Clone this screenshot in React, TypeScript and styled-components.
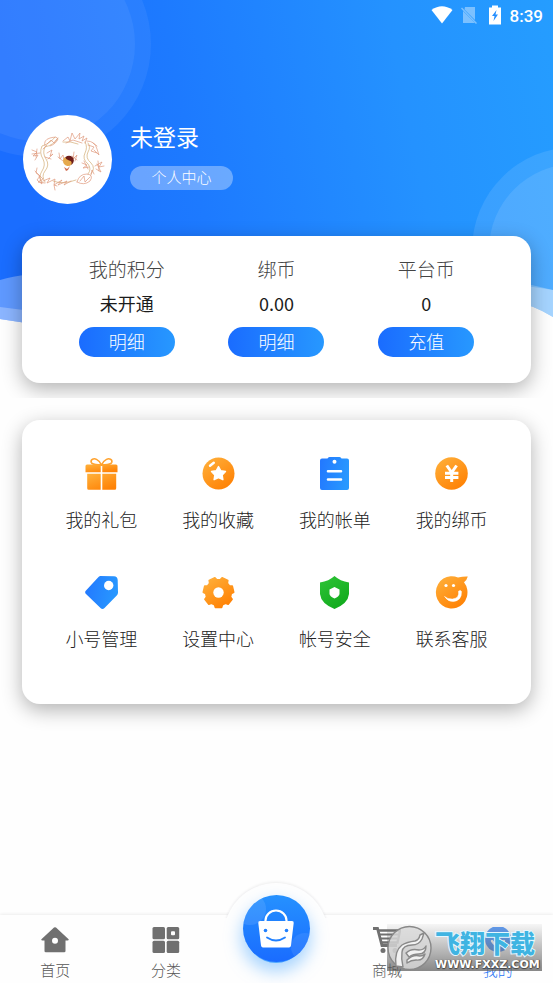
import React from "react";
import styled, { createGlobalStyle } from "styled-components";

const GlobalStyle = createGlobalStyle`
  * { box-sizing: border-box; }
  body {
    margin: 0;
    background: #fefefe;
    font-family: Roboto, "Noto Sans CJK SC", sans-serif;
    font-weight: 300;
  }
  button { font: inherit; border: 0; padding: 0; cursor: pointer; }
  a { color: inherit; text-decoration: none; }
`;

const Page = styled.div`
  min-height: 100vh;
  display: flex;
  flex-direction: column;
`;

const Header = styled.header`
  position: relative;
  overflow: hidden;
  padding-bottom: 15px;
`;

const Backdrop = styled.div`
  position: absolute;
  inset: 0 0 auto;
  height: 330px;
  overflow: hidden;
`;

const Waves = styled.svg`
  display: block;
  width: 100%;
  height: 100%;
`;

const Bubble = styled.span<{ $size: number; $top: number; $left?: number; $right?: number }>`
  position: absolute;
  width: ${(p) => p.$size}px;
  height: ${(p) => p.$size}px;
  top: ${(p) => p.$top}px;
  ${(p) => (p.$left !== undefined ? `left: ${p.$left}px;` : "")}
  ${(p) => (p.$right !== undefined ? `right: ${p.$right}px;` : "")}
  border-radius: 50%;
  background: rgba(255, 255, 255, ${(p) => (p.$right !== undefined ? 0.1 : 0.06)});
`;

const StatusBar = styled.div`
  position: relative;
  height: 32px;
  padding-right: 10px;
  display: flex;
  justify-content: flex-end;
  align-items: center;
  color: #fff;
  font: 500 17px/32px Roboto, sans-serif;
  svg { display: block; }
`;

const StatusIcons = styled.span`
  display: flex;
  align-items: center;
  gap: 8px;
  margin-right: 5px;
  padding-bottom: 2px;
`;

const Profile = styled.section`
  position: relative;
  margin-top: 83px;
  padding: 0 23px;
  display: flex;
  gap: 18px;
`;

const Avatar = styled.svg`
  flex: none;
  width: 89px;
  height: 89px;
  border-radius: 50%;
  background: #fff;
`;

const Identity = styled.div`
  display: flex;
  flex-direction: column;
  align-items: flex-start;
  padding-top: 6px;
`;

const UserName = styled.h1`
  margin: 0 0 9px;
  font-size: 23px;
  line-height: 36px;
  font-weight: 400;
  color: #fff;
`;

const CenterLink = styled.a`
  width: 103px;
  height: 24px;
  border-radius: 12px;
  background: rgba(255, 255, 255, 0.34);
  color: #fff;
  font-size: 15px;
  line-height: 25px;
  text-align: center;
`;

const Card = styled.section`
  position: relative;
  margin: 0 22px;
  border-radius: 18px;
  background: #fff;
  box-shadow: 0 6px 20px rgba(0, 0, 0, 0.3);
`;

const BalanceCard = styled(Card)`
  margin-top: 32px;
  padding: 21px 30px 26px;
  display: grid;
  grid-template-columns: repeat(3, 1fr);
`;

const Balance = styled.div`
  display: flex;
  flex-direction: column;
  align-items: center;
`;

const BalanceTitle = styled.span`
  font-size: 19px;
  line-height: 28px;
  color: #444;
`;

const BalanceValue = styled.span`
  margin: 4px 0 9px;
  font-family: "Noto Sans CJK SC", sans-serif;
  font-size: 18px;
  font-weight: 400;
  line-height: 29px;
  color: #1c1c1c;
`;

const PillButton = styled.button`
  width: 96px;
  height: 30px;
  border-radius: 15px;
  background: linear-gradient(90deg, #1a6cff, #2798ff);
  color: #fff;
  font-size: 18px;
  line-height: 31px;
`;

const MenuCard = styled(Card)`
  margin-top: 22px;
  padding: 37px 21px 50px;
  display: grid;
  grid-template-columns: repeat(4, 1fr);
  row-gap: 41px;
`;

const MenuItem = styled.a`
  display: flex;
  flex-direction: column;
  align-items: center;
  gap: 17px;
  color: #222;
  font-size: 18px;
  line-height: 28px;
  svg { display: block; width: 33px; height: 33px; }
`;

const TabBar = styled.nav`
  position: relative;
  margin-top: auto;
  height: 68px;
  display: grid;
  grid-template-columns: repeat(5, 1fr);
  background: #fefefe;
  box-shadow: 0 -1px 3px rgba(0, 0, 0, 0.07);
`;

const Tab = styled.a<{ $active?: boolean }>`
  display: flex;
  flex-direction: column;
  align-items: center;
  gap: 7px;
  padding-top: 12px;
  color: ${(p) => (p.$active ? "#1f74f5" : "#555")};
  font-size: 15px;
  line-height: 22px;
  svg { display: block; width: 28px; height: 26px; color: #707070; }
`;

const CenterTab = styled.div`
  position: relative;
  display: flex;
  justify-content: center;
`;

const Bump = styled.span`
  position: absolute;
  top: -32px;
  width: 104px;
  height: 104px;
  border-radius: 50%;
  background: #fefefe;
  box-shadow: 0 -1px 3px rgba(0, 0, 0, 0.07);
  clip-path: inset(-6px -6px 69px -6px);
`;

const MallButton = styled.button`
  position: absolute;
  top: -20px;
  width: 67px;
  height: 67px;
  border-radius: 50%;
  overflow: hidden;
  background: linear-gradient(#2591ff, #1a6cff);
  svg { display: block; }
`;

const Glow = styled.span`
  position: absolute;
  top: -12px;
  width: 60px;
  height: 60px;
  border-radius: 50%;
  background: #4fa8ff;
  box-shadow: 0 4px 16px 5px rgba(90, 175, 255, 0.5);
`;

const Watermark = styled.div`
  position: absolute;
  right: 11px;
  bottom: 12px;
  width: 155px;
  height: 47px;
  display: flex;
  align-items: center;
  background: linear-gradient(rgba(150, 150, 150, 0.08), rgba(90, 90, 90, 0.72));
  pointer-events: none;
  > svg { flex: none; margin-right: 2px; }
`;

const WatermarkText = styled.div`
  display: flex;
  flex-direction: column;
  align-items: flex-start;
`;

const SiteName = styled.span`
  font: 900 25px/34px "Noto Sans CJK SC", sans-serif;
  color: #3fb4e2;
  paint-order: stroke fill;
  -webkit-text-stroke: 2px #e4f7ff;
`;

const SiteAddress = styled.span`
  font: 700 11px/12px "DejaVu Sans", sans-serif;
  color: #fff;
  text-shadow: 0 1px 1px #444, 1px 0 1px #444;
  white-space: nowrap;
`;

const Defs = styled.svg`
  position: absolute;
  width: 0;
  height: 0;
`;

const gearPath = (() => {
  const at = (deg: number, r: number) => {
    const a = (deg * Math.PI) / 180;
    return `${(16.5 + r * Math.cos(a)).toFixed(2)} ${(16.5 + r * Math.sin(a)).toFixed(2)}`;
  };
  const points: string[] = [];
  for (let i = 0; i < 7; i++) {
    const c = 90 + (i * 360) / 7;
    points.push(at(c - 18, 12.8), at(c - 12, 15.2), at(c + 12, 15.2), at(c + 18, 12.8));
  }
  return `M${points.join("L")}Z`;
})();

const GiftIcon = () => (
  <svg viewBox="0 0 33 33">
    <path d="M16.5 8C12 7.5 7 8 6.2 5.2 5.5 2.4 8.7 1 11.5 2.4 14 3.7 15.8 6 16.5 8ZM16.5 8C21 7.5 26 8 26.8 5.2 27.5 2.4 24.3 1 21.5 2.4 19 3.7 17.2 6 16.5 8Z" fill="none" stroke="#ffa22e" strokeWidth="1.6" />
    <path d="M2 7.5H15.7V15.2H.5V9Q.5 7.5 2 7.5ZM17.3 7.5H31Q32.5 7.5 32.5 9V15.2H17.3Z" fill="url(#orange)" />
    <path d="M2.2 16.8H15.7V32.8H3.7Q2.2 32.8 2.2 31.3ZM17.3 16.8H31.2V31.3Q31.2 32.8 29.7 32.8H17.3Z" fill="url(#orange)" />
  </svg>
);

const StarBallIcon = () => (
  <svg viewBox="0 0 33 33">
    <circle cx="16.5" cy="16.5" r="16" fill="url(#orange)" />
    <path d="M16.5 9.5 18.8 13.8 23.5 14.5 20.2 18 20.9 22.7 16.5 20.6 12.1 22.7 12.8 18 9.5 14.5 14.2 13.8Z" fill="#fff" stroke="#fff" strokeWidth="1.4" strokeLinejoin="round" />
    <path d="M8 8.800 11.8 5.8" stroke="#fff" strokeWidth="2.4" strokeLinecap="round" />
  </svg>
);

const BillIcon = () => (
  <svg viewBox="0 0 33 33">
    <path d="M4 1.5H9.5Q10 0 11.5 0H21.5Q23 0 23.5 1.5H29Q31 1.5 31 3.5V31Q31 33 29 33H4Q2 33 2 31V3.5Q2 1.5 4 1.5Z" fill="url(#blue)" />
    <circle cx="16.5" cy="4.8" r="2" fill="#fff" />
    <path d="M10 14.3H23M10 22.5H23" stroke="#fff" strokeWidth="2.6" strokeLinecap="round" />
  </svg>
);

const YuanIcon = () => (
  <svg viewBox="0 0 33 33">
    <circle cx="16.5" cy="16.5" r="16.3" fill="url(#orange)" />
    <path d="M11.8 8.5 16.7 15.500 21.6 8.5M16.700 15V25M10 16.2H23.400M10 20.500H23.400" stroke="#fff" strokeWidth="3" fill="none" />
  </svg>
);

const TagIcon = () => (
  <svg viewBox="0 0 33 33">
    <path d="M15.5 0 29 .3Q32.5 .6 32.7 4L33 16.5Q33 18 32 19.2L19.5 32Q17.500 34 15.500 32L1 18Q-.7 16.2 1 14.5L13.5 1Q14.5 0 15.5 0Z" fill="url(#blue)" />
    <circle cx="23.7" cy="9.5" r="4.7" fill="#fff" />
  </svg>
);

const GearIcon = () => (
  <svg viewBox="0 0 33 33">
    <path d={gearPath} fill="url(#orange)" stroke="url(#orange)" strokeWidth="1.6" strokeLinejoin="round" />
    <circle cx="16.5" cy="16.5" r="5.2" fill="#fff" />
  </svg>
);

const ShieldIcon = () => (
  <svg viewBox="0 0 33 33">
    <path d="M16.5 0Q22 5 31 6.5V18Q30 27.5 16.5 33 3 27.5 2 18V6.5Q11 5 16.5 0Z" fill="url(#green)" />
    <path d="M16.5 11 21.5 13.5V18Q21 20.5 16.5 22.5 12 20.5 11.5 18V13.5Z" fill="#fff" />
  </svg>
);

const SmileIcon = () => (
  <svg viewBox="0 0 33 33">
    <path d="M23 1.500Q28 .3 32.8 .5 32 4 29 6.200A15.800 16.200 0 1 1 23 1.500Z" fill="url(#orange)" />
    <circle cx="11" cy="9.500" r="1.600" fill="#fff" />
    <circle cx="18.500" cy="9.500" r="1.600" fill="#fff" />
    <path d="M9.500 20.500Q13 26 18.500 25.500 26.800 24.500 26.500 15.500 25.500 13.500 23.500 15.200 24.800 22 17.500 23 12.500 23.200 9.500 20.500Z" fill="#fff" stroke="#fff" strokeWidth=".5" />
  </svg>
);

const HomeIcon = () => (
  <svg viewBox="0 0 28 26">
    <path d="M13 .6Q14 -.3 15 .6L27.6 12.2Q28.2 13.6 26.5 13.6H24.5V24Q24.5 25.3 23.2 25.3H4.8Q3.5 25.3 3.5 24V13.6H1.5Q-.2 13.6 .4 12.2Z" fill="currentColor" />
    <circle cx="14" cy="13.8" r="3" fill="#fff" />
  </svg>
);

const GridIcon = () => (
  <svg viewBox="0 0 28 26" fill="currentColor">
    <rect x=".5" y="0" width="12.5" height="12.2" rx="1.5" />
    <rect x="14.7" y="0" width="12.5" height="12.2" rx="1.5" />
    <rect x=".5" y="13.8" width="12.5" height="12.2" rx="1.5" />
    <rect x="14.7" y="13.8" width="12.5" height="12.2" rx="1.5" />
    <rect x="19" y="4.2" width="4" height="4" rx="1" fill="#fff" />
  </svg>
);

const CartIcon = () => (
  <svg viewBox="0 0 28 26">
    <path d="M0 1.5H4.5L9 18.5H24" fill="none" stroke="currentColor" strokeWidth="2.8" />
    <path d="M6 3.5H27L24.5 15.5H9" fill="none" stroke="currentColor" strokeWidth="2.4" />
    <path d="M7 7.5H25M8 11.5H24" stroke="currentColor" strokeWidth="2" />
    <circle cx="10" cy="23.5" r="2.5" fill="currentColor" />
    <circle cx="22" cy="23.5" r="2.5" fill="currentColor" />
  </svg>
);

const MineIcon = () => (
  <svg viewBox="0 0 28 26">
    <circle cx="14" cy="12" r="13" fill="#5c9bf5" />
    <path d="M8 14Q14 23 20 14" fill="none" stroke="#fff" strokeWidth="2.4" strokeLinecap="round" />
  </svg>
);

const balances = [
  { title: "我的积分", value: "未开通", action: "明细" },
  { title: "绑币", value: "0.00", action: "明细" },
  { title: "平台币", value: "0", action: "充值" },
];

const menu = [
  { label: "我的礼包", Icon: GiftIcon },
  { label: "我的收藏", Icon: StarBallIcon },
  { label: "我的帐单", Icon: BillIcon },
  { label: "我的绑币", Icon: YuanIcon },
  { label: "小号管理", Icon: TagIcon },
  { label: "设置中心", Icon: GearIcon },
  { label: "帐号安全", Icon: ShieldIcon },
  { label: "联系客服", Icon: SmileIcon },
];

const AvatarArt = () => (
  <Avatar viewBox="0 0 89 89" role="img" aria-label="头像">
    <g fill="none" strokeLinecap="round" strokeLinejoin="round">
      <g stroke="#d8b787" strokeWidth=".8">
        <path d="M35 23Q31 30 22 32 19 38 23 44 27 50 22 56 18 61 22 67" />
        <path d="M32 22Q28 28 19 31 16 38 20 44 23 50 19 56 15 62 19 67" />
        <path d="M65 28Q68 32 65 37 62 43 68 48 73 53 68 59" />
        <path d="M62 27Q65 32 62 38 59 44 65 49 69 54 65 59" />
        <path d="M40 27Q48 26 55 29M30 66Q40 70 53 65" />
      </g>
      <g stroke="#e09a7c" strokeWidth=".7">
        <path d="M22 31Q20 25 27 23 34 21 35 24 33 29 27 31M24 29 28 25 31 28 34 24M20 34 24 30" />
        <path d="M9 35 14 37 10 41 15 40 12 45M9 39 17 38M14 34 13 42" />
        <path d="M24 38 29 35 27 41 30 39 25 44M22 42 28 44" />
        <path d="M40 26 45 22 47 26 49 18 52 24 57 18 56 24 61 21 59 26 64 23 62 28M43 28 50 25 59 28" />
        <path d="M64 26Q72 26 74 34L76 40 71 35M65 30 71 32 68 36 74 38M70 28 74 31" />
        <path d="M59 48 64 50 60 53 66 52M61 46 65 54M72 51 79 47 76 52 81 51M73 54 78 57 74 49M75 46 76 56" />
        <path d="M14 53 13 58 17 61 14 65 19 69 16 61M12 56 20 64 15 67 22 68" />
        <path d="M20 66 27 63 24 68 32 64 31 70 39 65 35 70 44 66 41 70 48 66M32 75 31 70 34 71" />
        <path d="M54 67Q56 59 64 59 71 60 67 66 61 71 54 67M57 66 61 61 62 67 67 62M68 60 69 55 71 59" />
        <path d="M36 38 37 44 40 40 41 45M35 42 40 46M51 37 50 44 54 40 52 46M49 41 54 45" />
      </g>
    </g>
    <circle cx="46" cy="45.5" r="4.800" fill="#6d1d18" />
    <path d="M42 42A4.8 4.8 0 0 0 48 50Q50 46 46 45.5 43 45 42 42Z" fill="#e6a94c" />
    <path d="M41 52 44 54 47 51 45 55 43 56Z" fill="#cf6a4e" />
  </Avatar>
);

export default function App() {
  return (
    <Page>
      <GlobalStyle />
      <Defs aria-hidden="true">
        <defs>
          <linearGradient id="orange" x1="0" y1="0" x2=".7" y2="1">
            <stop offset="0" stopColor="#ffb23d" />
            <stop offset="1" stopColor="#ff8205" />
          </linearGradient>
          <linearGradient id="blue" x1="0" y1=".3" x2="1" y2=".5">
            <stop offset="0" stopColor="#2379ff" />
            <stop offset="1" stopColor="#2899ff" />
          </linearGradient>
          <linearGradient id="green" x1="0" y1="0" x2=".6" y2="1">
            <stop offset="0" stopColor="#2fc437" />
            <stop offset="1" stopColor="#12ab1e" />
          </linearGradient>
        </defs>
      </Defs>

      <Header>
        <Backdrop aria-hidden="true">
          <Waves viewBox="0 0 553 330" preserveAspectRatio="none">
            <defs>
              <linearGradient id="sky" x1="0" y1=".12" x2="1" y2="0">
                <stop offset="0" stopColor="#1a6dff" />
                <stop offset=".3" stopColor="#1d7aff" />
                <stop offset=".7" stopColor="#2492ff" />
                <stop offset="1" stopColor="#259dff" />
              </linearGradient>
            </defs>
            <path d="M0 0H553V317Q510 290 440 300C300 330 120 340 0 319Z" fill="url(#sky)" />
            <path d="M0 280Q40 268 110 275C260 300 430 270 553 290V317Q510 290 440 300C300 330 120 340 0 319Z" fill="#fff" fillOpacity=".3" />
            <path d="M0 307Q120 325 300 300 440 260 553 290V317Q510 290 440 300C300 330 120 340 0 319Z" fill="#fff" fillOpacity=".28" />
          </Waves>
          <Bubble $size={226} $top={-69} $left={-75} />
          <Bubble $size={194} $top={-53} $left={-59} />
          <Bubble $size={206} $top={147} $right={-125} />
          <Bubble $size={172} $top={164} $right={-108} />
        </Backdrop>

        <StatusBar>
          <StatusIcons>
            <svg width="22" height="18" viewBox="0 0 22 18">
              <path d="M.5 4Q11-3.5 21.5 4L11 17.5Z" fill="#fff" />
            </svg>
            <svg width="16" height="18" viewBox="0 0 16 18" opacity=".4">
              <path d="M4 1H14V14L3.5 3.5ZM2 5 14 17H2Z" fill="#fff" />
              <path d="M.5 2 15.5 17.5" stroke="#fff" strokeWidth="1.5" />
            </svg>
            <svg width="20" height="20" viewBox="0 0 20 20">
              <path d="M4 2.5H7V.5H13V2.5H16V19.5H4Z" fill="#fff" />
              <path d="M11.5 5 7 11H9.5L8.5 16 13 9.5H10.5Z" fill="#258fff" />
            </svg>
          </StatusIcons>
          <span>8:39</span>
        </StatusBar>

        <Profile>
          <AvatarArt />
          <Identity>
            <UserName>未登录</UserName>
            <CenterLink href="#profile">个人中心</CenterLink>
          </Identity>
        </Profile>

        <BalanceCard>
          {balances.map((b) => (
            <Balance key={b.title}>
              <BalanceTitle>{b.title}</BalanceTitle>
              <BalanceValue>{b.value}</BalanceValue>
              <PillButton type="button">{b.action}</PillButton>
            </Balance>
          ))}
        </BalanceCard>
      </Header>

      <MenuCard>
        {menu.map(({ label, Icon }) => (
          <MenuItem href="#menu" key={label}>
            <Icon />
            {label}
          </MenuItem>
        ))}
      </MenuCard>

      <TabBar>
        <Tab href="#home"><HomeIcon />首页</Tab>
        <Tab href="#category"><GridIcon />分类</Tab>
        <CenterTab>
          <Bump />
          <Glow />
          <MallButton type="button" aria-label="购物">
            <svg width="67" height="67" viewBox="0 0 67 67">
              <circle cx="7" cy="14" r="16" fill="#fff" fillOpacity=".1" />
              <circle cx="62" cy="52" r="14" fill="#fff" fillOpacity=".08" />
              <path d="M22.5 27V25.5A10.5 10 0 0 1 43.5 25.5V27" fill="none" stroke="#fff" strokeWidth="2.2" />
              <path d="M17 26H49Q51 26 50.7 28L48 50.5Q47.7 52.5 46 52.5H20Q18.3 52.5 18 50.5L15.3 28Q15 26 17 26Z" fill="#fff" />
              <circle cx="22.5" cy="35.5" r="1.8" fill="#2080ff" />
              <circle cx="43.5" cy="35.5" r="1.8" fill="#2080ff" />
              <path d="M24 42.5Q33 48.5 42 42.5" fill="none" stroke="#2080ff" strokeWidth="1.8" strokeLinecap="round" />
            </svg>
          </MallButton>
        </CenterTab>
        <Tab href="#shop"><CartIcon />商城</Tab>
        <Tab href="#mine" $active><MineIcon />我的</Tab>
        <Watermark>
          <svg width="46" height="46" viewBox="0 0 46 46">
            <circle cx="22.5" cy="23" r="21.5" fill="#d9d9d9" fillOpacity=".82" stroke="#888" strokeWidth="1.4" />
            <g fill="#f2f2f2" stroke="#8a8a8a" strokeWidth="1.4" strokeLinejoin="round">
              <path d="M9 41Q7 26 15 20 20 17 28 16 32 15 33 10L37 8 35 14Q32 20 25 20 16 20 15 27 14 34 16 42Z" />
              <path d="M19 28Q24 23 32 25 37 25 39 21 39 29 32 29 26 29 22 32Z" />
              <path d="M20 35Q26 29 33 31 36 31 38 29 36 36 29 35 24 35 20 38Z" />
            </g>
          </svg>
          <WatermarkText>
            <SiteName>飞翔下载</SiteName>
            <SiteAddress>WWW.FXXZ.COM</SiteAddress>
          </WatermarkText>
        </Watermark>
      </TabBar>
    </Page>
  );
}
